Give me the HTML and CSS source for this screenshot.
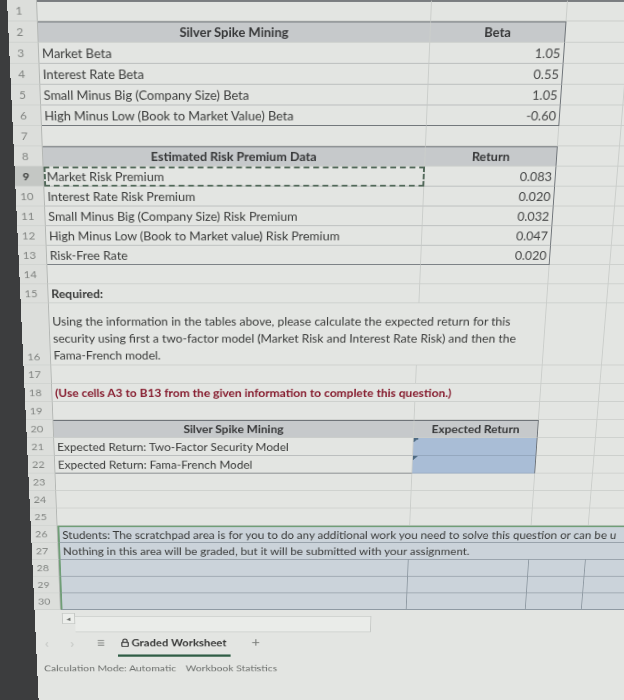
FILE: index.html
```html
<!DOCTYPE html>
<html>
<head>
<meta charset="utf-8">
<title>Graded Worksheet</title>
<link rel="stylesheet" href="styles.css">
</head>
<body>
<div class="screen">
  <div class="sheet">
    <div class="row first"><div class="rh">1</div><div class="c"></div><div class="c"></div><div class="c"></div><div class="c"></div></div>
    <div class="row"><div class="rh">2</div><div class="c hdr tt">Silver Spike Mining</div><div class="c hdr tt tr">Beta</div><div class="c"></div><div class="c"></div></div>
    <div class="row"><div class="rh">3</div><div class="c tl">Market Beta</div><div class="c num tr tl">1.05</div><div class="c"></div><div class="c"></div></div>
    <div class="row"><div class="rh">4</div><div class="c tl">Interest Rate Beta</div><div class="c num tr tl">0.55</div><div class="c"></div><div class="c"></div></div>
    <div class="row"><div class="rh">5</div><div class="c tl">Small Minus Big (Company Size) Beta</div><div class="c num tr tl">1.05</div><div class="c"></div><div class="c"></div></div>
    <div class="row"><div class="rh">6</div><div class="c tb">High Minus Low (Book to Market Value) Beta</div><div class="c num tr tb">-0.60</div><div class="c"></div><div class="c"></div></div>
    <div class="row"><div class="rh">7</div><div class="c"></div><div class="c"></div><div class="c"></div><div class="c"></div></div>
    <div class="row"><div class="rh">8</div><div class="c hdr tt">Estimated Risk Premium Data</div><div class="c hdr tt tr">Return</div><div class="c"></div><div class="c"></div></div>
    <div class="row"><div class="rh sel">9</div><div class="c tl ants">Market Risk Premium</div><div class="c num tr tl">0.083</div><div class="c"></div><div class="c"></div></div>
    <div class="row"><div class="rh">10</div><div class="c tl">Interest Rate Risk Premium</div><div class="c num tr tl">0.020</div><div class="c"></div><div class="c"></div></div>
    <div class="row"><div class="rh">11</div><div class="c tl">Small Minus Big (Company Size) Risk Premium</div><div class="c num tr tl">0.032</div><div class="c"></div><div class="c"></div></div>
    <div class="row"><div class="rh">12</div><div class="c tl">High Minus Low (Book to Market value) Risk Premium</div><div class="c num tr tl">0.047</div><div class="c"></div><div class="c"></div></div>
    <div class="row"><div class="rh">13</div><div class="c tb">Risk-Free Rate</div><div class="c num tr tb">0.020</div><div class="c"></div><div class="c"></div></div>
    <div class="row"><div class="rh">14</div><div class="c"></div><div class="c"></div><div class="c"></div><div class="c"></div></div>
    <div class="row"><div class="rh">15</div><div class="c bold">Required:</div><div class="c"></div><div class="c"></div><div class="c"></div></div>
    <div class="row tall"><div class="rh low">16</div><div class="c span2 wrap">Using the information in the tables above, please calculate the expected return for this<br>security using first a two-factor model (Market Risk and Interest Rate Risk) and then the<br>Fama-French model.</div><div class="c"></div><div class="c"></div></div>
    <div class="row"><div class="rh">17</div><div class="c"></div><div class="c"></div><div class="c"></div><div class="c"></div></div>
    <div class="row"><div class="rh">18</div><div class="c span2 bold red">(Use cells A3 to B13 from the given information to complete this question.)</div><div class="c"></div><div class="c"></div></div>
    <div class="row"><div class="rh">19</div><div class="c"></div><div class="c"></div><div class="c"></div><div class="c"></div></div>
    <div class="row"><div class="rh">20</div><div class="c hdr tt">Silver Spike Mining</div><div class="c hdr tt tr">Expected Return</div><div class="c"></div><div class="c"></div></div>
    <div class="row"><div class="rh">21</div><div class="c tl">Expected Return: Two-Factor Security Model</div><div class="c input tr">&nbsp;</div><div class="c"></div><div class="c"></div></div>
    <div class="row"><div class="rh">22</div><div class="c tb">Expected Return: Fama-French Model</div><div class="c input tr tb">&nbsp;</div><div class="c"></div><div class="c"></div></div>
    <div class="row"><div class="rh">23</div><div class="c"></div><div class="c"></div><div class="c"></div><div class="c"></div></div>
    <div class="row"><div class="rh">24</div><div class="c"></div><div class="c"></div><div class="c"></div><div class="c"></div></div>
    <div class="row"><div class="rh">25</div><div class="c"></div><div class="c"></div><div class="c"></div><div class="c"></div></div>
    <div class="row"><div class="rh">26</div><div class="c scr stop sleft span4">Students: The scratchpad area is for you to do any additional work you need to solve this question or can be u</div></div>
    <div class="row"><div class="rh">27</div><div class="c scr sleft span4">Nothing in this area will be graded, but it will be submitted with your assignment.</div></div>
    <div class="row"><div class="rh">28</div><div class="c scr sleft"></div><div class="c scr"></div><div class="c scr"></div><div class="c scr"></div></div>
    <div class="row"><div class="rh">29</div><div class="c scr sleft"></div><div class="c scr"></div><div class="c scr"></div><div class="c scr"></div></div>
    <div class="row"><div class="rh">30</div><div class="c scr sleft"></div><div class="c scr"></div><div class="c scr"></div><div class="c scr"></div></div>
  </div>

  <div class="hscroll"><div class="sarrow">&#9666;</div><div class="sbar"></div></div>

  <div class="tabs">
    <span class="nav">&lsaquo;</span>
    <span class="nav nav2">&rsaquo;</span>
    <span class="menu">&#8801;</span>
    <div class="tab">
      <svg class="lock" width="9" height="12" viewBox="0 0 9 12"><path d="M2 5.5V3.6a2.5 2.5 0 0 1 5 0v1.9" fill="none" stroke="#3a3a3a" stroke-width="1.3"/><rect x="0.8" y="5.5" width="7.4" height="5.8" rx="0.8" fill="none" stroke="#3a3a3a" stroke-width="1.3"/></svg>
      <span>Graded Worksheet</span>
    </div>
    <span class="plus">+</span>
  </div>

  <div class="status"><span class="calc">Calculation Mode: Automatic</span><span class="stats">Workbook Statistics</span></div>
</div>
</body>
</html>
```

FILE: styles.css
```css
html, body {
  margin: 0;
  padding: 0;
  height: 100%;
}

body {
  background: #3c3d3e;
  overflow: hidden;
  font-family: Lato, "Open Sans", sans-serif;
}

.screen {
  width: 713px;
  height: 880px;
  margin-left: 7px;
  background: #e3e5e2;
  transform-origin: 221px 0;
  transform: perspective(1000px) rotateX(-11.54deg);
}

.sheet {
  display: flex;
  flex-direction: column;
}

.row {
  display: grid;
  grid-template-columns: 30px 395px 136px 64px 88px;
  height: 22px;
}

.row.tall {
  height: 73px;
}

.rh {
  box-sizing: border-box;
  background: #dcdedb;
  border-right: 1px solid #b4b7b4;
  border-bottom: 1px solid #cfd2cf;
  color: #828582;
  font-size: 12px;
  display: flex;
  align-items: center;
  justify-content: center;
  padding-right: 6px;
}

.rh.low {
  align-items: flex-end;
  padding-bottom: 2px;
}

.rh.sel {
  background: #c4c7c4;
  color: #3a3c3a;
  font-weight: 700;
}

.c {
  box-sizing: border-box;
  border-right: 1px solid #cbcecb;
  border-bottom: 1px solid #cbcecb;
  padding: 0 3px;
  display: flex;
  align-items: center;
  white-space: nowrap;
  font-size: 13px;
  color: #3a3b3a;
  min-width: 0;
}

.row.first .c {
  border-top: 2px solid #7a7d80;
}

.hdr {
  background: #c6c9cb;
  font-weight: 700;
  justify-content: center;
  color: #353637;
}

.tt {
  border-top: 1px solid #6e7378;
}

.tr {
  border-right: 1px solid #6e7378;
}

.tb {
  border-bottom: 1px solid #6e7378;
}

.tl {
  border-bottom-color: #b9bcbc;
}

.num {
  justify-content: flex-end;
  color: #454646;
}

.ants {
  outline: 2px dashed #52695a;
  outline-offset: -2px;
}

.bold {
  font-weight: 700;
}

.red {
  color: #861d2f;
}

.span2 {
  grid-column: 2 / 4;
}

.span4 {
  grid-column: 2 / 6;
}

.wrap {
  white-space: normal;
  line-height: 20px;
  align-items: flex-end;
  padding-bottom: 1px;
}

.input {
  background:
    linear-gradient(135deg, #4d6a82 50%, transparent 50%) top left / 6px 6px no-repeat,
    #a9bdd6;
  border-bottom-color: #93a6bd;
}

.scr {
  background: #cbd3da;
  border-right-color: #8f9aa3;
  border-bottom-color: #8f9aa3;
}

.span4.scr {
  border-right: none;
}

.stop {
  border-top: 2px solid #6f9e76;
}

.sleft {
  border-left: 2px solid #6f9e76;
}

.hscroll {
  height: 31px;
  display: flex;
  align-items: flex-start;
  padding: 4px 0 0 31px;
  box-sizing: border-box;
}

.sarrow {
  width: 15px;
  height: 15px;
  box-sizing: border-box;
  border: 1px solid #c4c7c4;
  background: #eceeeb;
  color: #6a6d6a;
  font-size: 9px;
  display: flex;
  align-items: center;
  justify-content: center;
}

.sbar {
  width: 339px;
  height: 22px;
  margin-top: 4px;
  box-sizing: border-box;
  border: 1px solid #c6c9c6;
  border-left: none;
  background: #eaece9;
}

.tabs {
  height: 34px;
  display: flex;
  align-items: center;
  padding-left: 10px;
  font-size: 13px;
}

.nav {
  width: 29px;
  color: #c2c5c2;
  font-size: 18px;
  margin-bottom: 9px;
}

.nav2 {
  width: 31px;
}

.menu {
  width: 24px;
  color: #777a77;
  font-size: 17px;
  margin-bottom: 9px;
}

.tab {
  width: 130px;
  height: 30px;
  box-sizing: border-box;
  display: flex;
  align-items: center;
  gap: 3px;
  padding: 0 0 6px 4px;
  border-bottom: 3px solid #2f5d45;
  font-weight: 700;
  color: #383938;
}

.plus {
  margin-left: 24px;
  color: #7a7d7a;
  font-size: 17px;
  margin-bottom: 9px;
}

.status {
  height: 26px;
  display: flex;
  align-items: center;
  padding-left: 8px;
  font-size: 12px;
  color: #6d706d;
  white-space: nowrap;
}

.calc {
  flex: 0 0 164px;
}
```
